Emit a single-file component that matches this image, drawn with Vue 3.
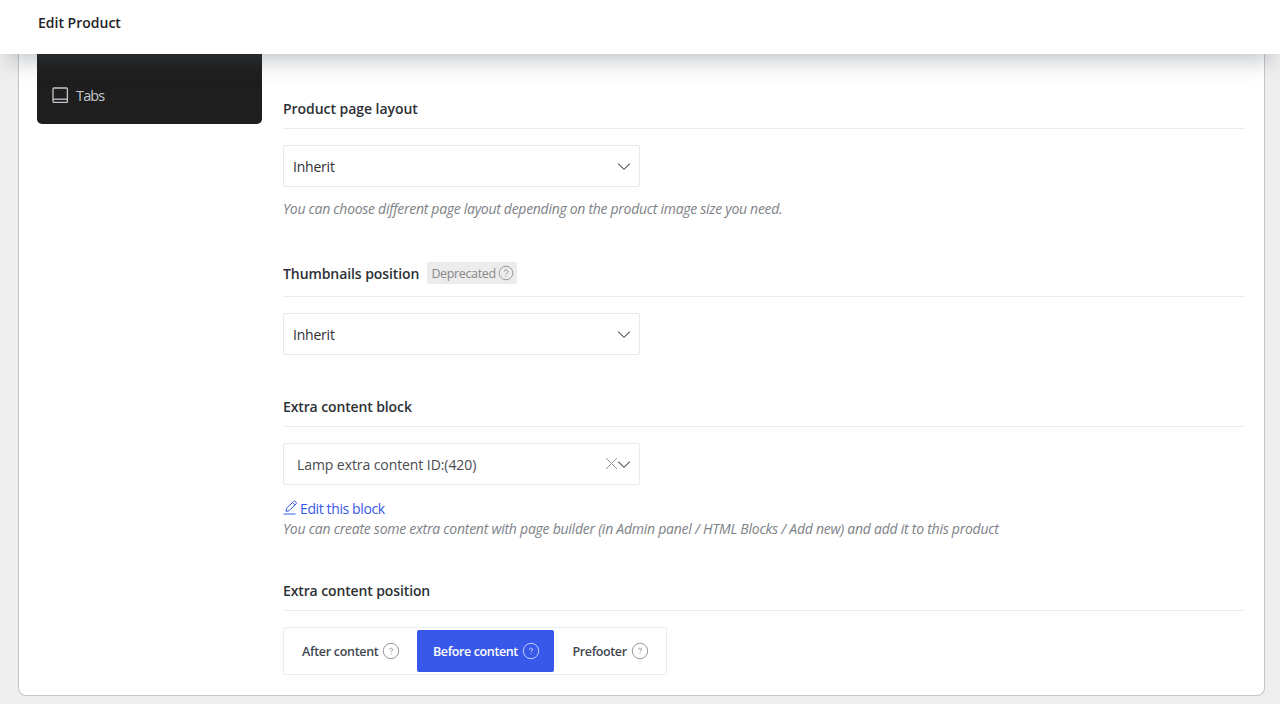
<script setup>
const positions = [
  { label: 'After content', active: false, cls: 'after' },
  { label: 'Before content', active: true, cls: 'before' },
  { label: 'Prefooter', active: false, cls: 'pre' },
]
</script>

<template>
  <div class="page">
    <header class="topbar"><h1>Edit Product</h1></header>
    <main class="card">
      <aside class="sidebar">
        <a class="nav-item">
          <svg width="18" height="18" viewBox="0 0 18 18" fill="none" stroke="currentColor" stroke-width="1.3"><rect x="2" y="2" width="14.4" height="14.4" rx="1" /><path d="M2 13.2h14.4" /></svg>
          <span>Tabs</span>
        </a>
      </aside>
      <div class="options">
        <section class="field layout">
          <h2><span>Product page layout</span></h2>
          <div class="select">
            <span class="value">Inherit</span>
            <svg class="chev" width="14" height="9" viewBox="0 0 14 9"><path d="M1.2 1.7 7 7.3l5.8-5.6" /></svg>
          </div>
          <p class="hint">You can choose different page layout depending on the product image size you need.</p>
        </section>
        <section class="field thumbs">
          <h2>
            <span>Thumbnails position</span>
            <span class="badge">
              <span>Deprecated</span>
              <svg width="16" height="16" viewBox="0 0 16 16"><circle cx="8" cy="8" r="6.8" /><path d="M6.2 6.6a1.8 1.8 0 1 1 2.7 1.5c-.6.35-.9.6-.9 1.3M8 10.7v1" /></svg>
            </span>
          </h2>
          <div class="select">
            <span class="value">Inherit</span>
            <svg class="chev" width="14" height="9" viewBox="0 0 14 9"><path d="M1.2 1.7 7 7.3l5.8-5.6" /></svg>
          </div>
        </section>
        <section class="field block">
          <h2><span>Extra content block</span></h2>
          <div class="select">
            <span class="value lamp">Lamp extra content ID:(420)</span>
            <svg class="clear" width="13" height="13" viewBox="0 0 13 13"><path d="m1 1 11 11M12 1 1 12" /></svg>
            <svg class="chev" width="14" height="9" viewBox="0 0 14 9"><path d="M1.2 1.7 7 7.3l5.8-5.6" /></svg>
          </div>
          <a class="edit">
            <svg width="15" height="15" viewBox="0 0 15 15" fill="none" stroke="currentColor" stroke-width="1"><path d="M.5 14h12M3 11.4l.7-3.2 6.9-6.8q.8-.7 1.6 0l.9.8q.7.8 0 1.6l-6.9 6.9zM9.5 2.6l2.4 2.3" /></svg>
            <span>Edit this block</span>
          </a>
          <p class="hint long">You can create some extra content with page builder (in Admin panel / HTML Blocks / Add new) and add it to this product</p>
        </section>
        <section class="field position">
          <h2><span>Extra content position</span></h2>
          <div class="segments">
            <button v-for="p in positions" :key="p.label" :class="[p.cls, { active: p.active }]">
              <span>{{ p.label }}</span>
              <svg width="18" height="18" viewBox="0 0 18 18"><circle cx="9" cy="9" r="7.7" /><path d="M7.5 7.7a1.5 1.5 0 1 1 2.3 1.2c-.5.3-.8.55-.8 1.1M9 11.2v.9" /></svg>
            </button>
          </div>
        </section>
      </div>
    </main>
  </div>
</template>

<style>
body { background: #efefef; overflow: hidden; }
</style>

<style scoped>
* { box-sizing: border-box; }
.page {
  height: 704px;
  overflow: hidden;
  background: #efefef;
  font-family: "Open Sans", "Noto Sans", sans-serif;
  color: #2d3035;
}
.topbar {
  position: relative;
  z-index: 2;
  height: 54px;
  background: #fff;
  box-shadow: 0 14px 22px -8px rgba(70, 78, 90, .34);
  padding: 12px 38px;
}
h1 { margin: 0; font-size: 14px; line-height: 22px; font-weight: 600; color: #1d2327; }
.card {
  display: flex;
  gap: 21px;
  width: 1247px;
  height: 642px;
  margin-left: 18px;
  padding: 0 19px 0 18px;
  background: #fff;
  border: 1px solid #c3c4c7;
  border-top: 0;
  border-radius: 0 0 8px 8px;
}
.sidebar {
  width: 225px;
  height: 70px;
  background: #1e1e1e;
  border-radius: 0 0 5px 5px;
  padding: 30px 14px;
}
.nav-item { display: flex; align-items: center; gap: 7px; height: 22px; color: #c3c8ce; font-size: 14.5px; }
.nav-item span { letter-spacing: -.85px; }
.options { width: 962px; }
.field h2 {
  display: flex;
  align-items: center;
  margin: 0 0 16px;
  border-bottom: 1px solid #ececec;
  font-size: 14px;
  font-weight: 600;
  letter-spacing: -.05px;
  white-space: nowrap;
}
.layout { padding-top: 35px; height: 202px; }
.layout h2 { height: 40px; }
.thumbs { height: 134px; }
.thumbs h2 { height: 41px; padding-bottom: 6px; letter-spacing: -.08px; }
.block { height: 184px; }
.block h2, .position h2 { height: 37px; padding-bottom: 3px; letter-spacing: -.12px; }
.select {
  display: flex;
  align-items: center;
  width: 357px;
  height: 42px;
  padding: 0 9px;
  border: 1px solid #e8e8e8;
  border-radius: 2px;
  font-size: 14px;
}
.value { flex: 1; letter-spacing: -.22px; }
.lamp { padding-left: 4px; color: #4a4c50; letter-spacing: -.08px; white-space: nowrap; }
.chev, .clear { position: relative; left: 1px; fill: none; stroke: #50555c; stroke-width: 1.1; }
.clear { top: -1px; margin-right: -1px; stroke: #999; stroke-width: 1; }
.hint { margin: 12px 0 0; font-size: 14px; line-height: 20px; font-style: italic; letter-spacing: -.29px; color: #7d8288; white-space: nowrap; }
.hint.long { margin-top: 1px; letter-spacing: -.25px; }
.badge {
  display: flex;
  align-items: center;
  justify-content: space-between;
  width: 90px;
  height: 22px;
  margin-left: 8px;
  padding: 0 3px 0 4px;
  background: #ececec;
  border-radius: 2px;
  color: #888;
  font-size: 12.5px;
  font-weight: 400;
  letter-spacing: -.36px;
}
.badge svg, .segments svg { fill: none; stroke: #999; stroke-width: 1; flex: none; }
.edit { display: flex; align-items: center; gap: 2px; height: 20px; margin-top: 13px; color: #3858e9; font-size: 14px; letter-spacing: -.38px; }
.edit svg { position: relative; top: -1px; }
.segments {
  display: flex;
  width: 384px;
  height: 48px;
  padding: 2px;
  border: 1px solid #ececec;
  border-radius: 2px;
}
button {
  display: flex;
  align-items: center;
  gap: 4px;
  height: 42px;
  padding: 0 0 0 16px;
  border: 0;
  border-radius: 2px;
  background: none;
  font: 600 12.5px "Open Sans", sans-serif;
  letter-spacing: -.3px;
  color: #414750;
  white-space: nowrap;
}
.after { width: 131px; }
.before { width: 137px; letter-spacing: -.38px; }
.pre { width: 110px; padding-left: 18.5px; letter-spacing: -.38px; }
.segments .active { background: #3858e9; color: #fff; }
.segments .active svg { stroke: #c5d0ff; }
</style>
